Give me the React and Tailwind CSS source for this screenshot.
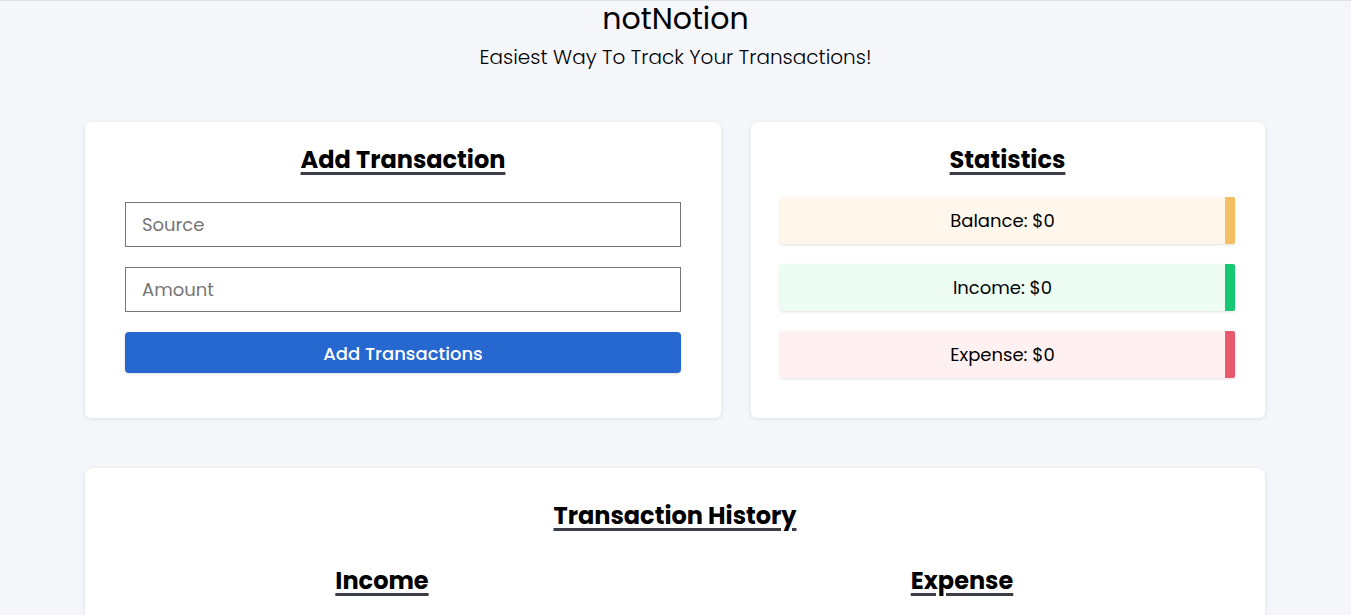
import React, { useState } from 'react';

const font = { fontFamily: '"Poppins", "Inter", "Liberation Sans", sans-serif' };

const StatRow = ({ label, value, bg, bar }) => (
    <div className={`flex h-[47px] rounded-[2px] shadow-[0_1px_3px_rgba(0,0,0,0.12)] ${bg}`}>
        <div className="flex-1 flex items-center justify-center text-[18px] text-black">
            {label}: ${value}
        </div>
        <div className={`w-[10px] rounded-r-[2px] ${bar}`}></div>
    </div>
);

const App = () => {
    const [source, setSource] = useState('');
    const [amount, setAmount] = useState('');

    return (
        <div style={font} className="min-h-[615px] bg-[#f5f6fa] border-t border-[#e2e2e2] text-black">
            <header className="text-center">
                <h1 className="text-[30px] leading-[36px] font-normal">notNotion</h1>
                <p className="mt-[8px] text-[20px] leading-[24px] font-light">Easiest Way To Track Your Transactions!</p>
            </header>

            <div className="w-[1180px] ml-[85px] mt-[53px]">
                <div className="grid grid-cols-[636px_514px] gap-[30px]">
                    {/* Add transaction form */}
                    <div className="bg-white rounded-[6px] shadow-[0_1px_4px_rgba(0,0,0,0.1)] px-[40px] pt-[22px] pb-[45px]">
                        <h2 className="text-center text-[24px] leading-[32px] font-bold underline decoration-[3px] underline-offset-[4px] decoration-[#3a3d45]">Add Transaction</h2>
                        <input
                            value={source}
                            onChange={(e) => setSource(e.target.value)}
                            placeholder="Source"
                            className="mt-[26px] block w-full h-[45px] border border-[#767676] px-[16px] text-[18px] placeholder:text-[#757575] outline-none"
                        />
                        <input
                            value={amount}
                            onChange={(e) => setAmount(e.target.value)}
                            placeholder="Amount"
                            className="mt-[20px] block w-full h-[45px] border border-[#767676] px-[16px] text-[18px] placeholder:text-[#757575] outline-none"
                        />
                        <button className="mt-[20px] w-full h-[41px] pt-px rounded-[4px] bg-[#2767d0] text-white text-[18px] font-medium shadow-[0_1px_3px_rgba(0,0,0,0.15)]">
                            Add Transactions
                        </button>
                    </div>

                    {/* Statistics */}
                    <div className="bg-white rounded-[6px] shadow-[0_1px_4px_rgba(0,0,0,0.1)] pl-[29px] pr-[30px] pt-[22px]">
                        <h2 className="text-center text-[24px] leading-[32px] font-bold underline decoration-[3px] underline-offset-[4px] decoration-[#3a3d45]">Statistics</h2>
                        <div className="mt-[21px] flex flex-col gap-[20px]">
                            <StatRow label="Balance" value={0} bg="bg-[#fff7ec]" bar="bg-[#f5bf64]" />
                            <StatRow label="Income" value={0} bg="bg-[#edfdf3]" bar="bg-[#16c774]" />
                            <StatRow label="Expense" value={0} bg="bg-[#fff1f1]" bar="bg-[#e9596e]" />
                        </div>
                    </div>
                </div>

                {/* History */}
                <div className="mt-[50px] bg-white rounded-t-[8px] shadow-[0_1px_4px_rgba(0,0,0,0.1)] pt-[32px] h-[160px]">
                    <h2 className="text-center text-[24px] leading-[32px] font-bold underline decoration-[3px] underline-offset-[4px] decoration-[#3a3d45]">Transaction History</h2>
                    <div className="mt-[33px] pl-[17px] grid grid-cols-[560px_560px] gap-[20px]">
                        <h3 className="text-center text-[24px] leading-[32px] font-bold underline decoration-[3px] underline-offset-[4px] decoration-[#3a3d45]">Income</h3>
                        <h3 className="text-center text-[24px] leading-[32px] font-bold underline decoration-[3px] underline-offset-[4px] decoration-[#3a3d45]">Expense</h3>
                    </div>
                </div>
            </div>
        </div>
    );
};

export default App;
